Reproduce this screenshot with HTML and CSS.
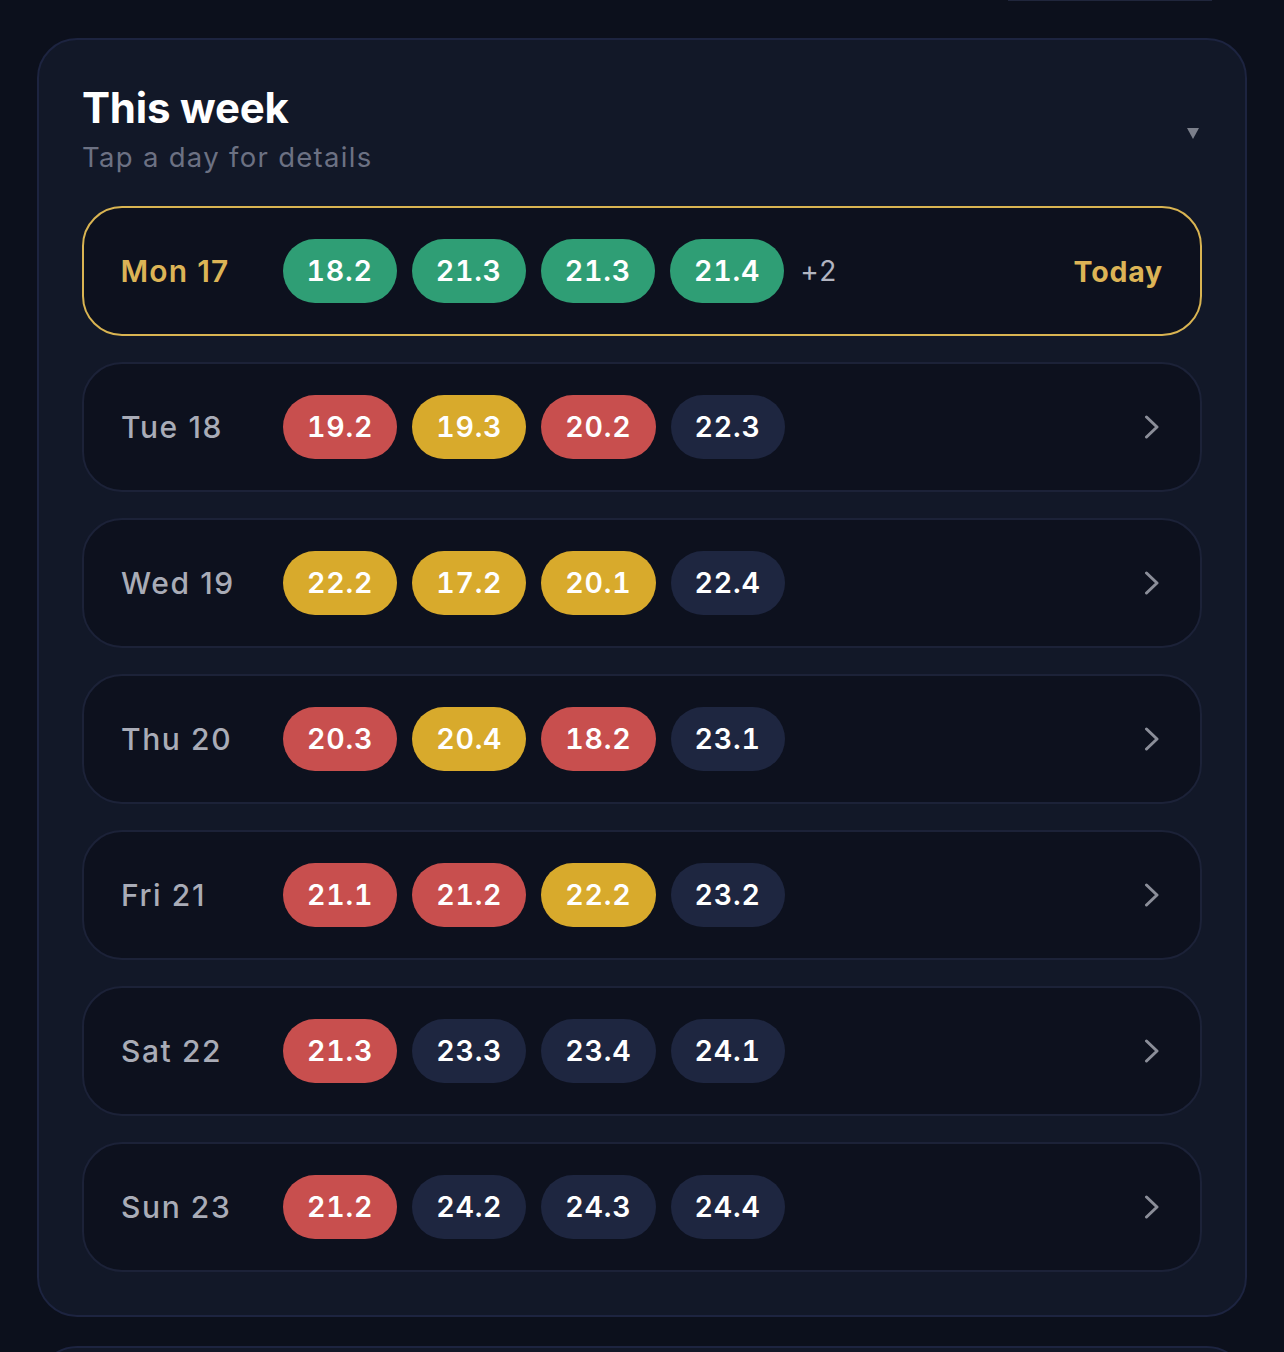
FILE: index.html
```html
<!DOCTYPE html>
<html lang="en">
<head>
<meta charset="utf-8">
<title>This week</title>
<link rel="stylesheet" href="styles.css">
</head>
<body>
<div class="prev-edge"></div>
<section class="card">
  <header class="card-head">
    <div class="head-text">
      <h1 class="title">This week</h1>
      <p class="subtitle">Tap a day for details</p>
    </div>
    <svg class="caret" width="12" height="11" viewBox="0 0 12 11"><path d="M0 0 H12 L6 11 Z" fill="#7b7f8b"/></svg>
  </header>
  <div class="days">
    <div class="day today">
      <span class="day-label">Mon 17</span>
      <div class="pills">
        <span class="pill green">18.2</span>
        <span class="pill green">21.3</span>
        <span class="pill green">21.3</span>
        <span class="pill green">21.4</span>
        <span class="more">+2</span>
      </div>
      <span class="today-tag">Today</span>
    </div>
    <div class="day">
      <span class="day-label">Tue 18</span>
      <div class="pills">
        <span class="pill red">19.2</span>
        <span class="pill yellow">19.3</span>
        <span class="pill red">20.2</span>
        <span class="pill navy">22.3</span>
      </div>
      <svg class="chev" width="16" height="24" viewBox="0 0 16 24"><path d="M2.5 2 L13 12 L2.5 22" fill="none" stroke="#8b8e99" stroke-width="3" stroke-linecap="round" stroke-linejoin="round"/></svg>
    </div>
    <div class="day">
      <span class="day-label">Wed 19</span>
      <div class="pills">
        <span class="pill yellow">22.2</span>
        <span class="pill yellow">17.2</span>
        <span class="pill yellow">20.1</span>
        <span class="pill navy">22.4</span>
      </div>
      <svg class="chev" width="16" height="24" viewBox="0 0 16 24"><path d="M2.5 2 L13 12 L2.5 22" fill="none" stroke="#8b8e99" stroke-width="3" stroke-linecap="round" stroke-linejoin="round"/></svg>
    </div>
    <div class="day">
      <span class="day-label">Thu 20</span>
      <div class="pills">
        <span class="pill red">20.3</span>
        <span class="pill yellow">20.4</span>
        <span class="pill red">18.2</span>
        <span class="pill navy">23.1</span>
      </div>
      <svg class="chev" width="16" height="24" viewBox="0 0 16 24"><path d="M2.5 2 L13 12 L2.5 22" fill="none" stroke="#8b8e99" stroke-width="3" stroke-linecap="round" stroke-linejoin="round"/></svg>
    </div>
    <div class="day">
      <span class="day-label">Fri 21</span>
      <div class="pills">
        <span class="pill red">21.1</span>
        <span class="pill red">21.2</span>
        <span class="pill yellow">22.2</span>
        <span class="pill navy">23.2</span>
      </div>
      <svg class="chev" width="16" height="24" viewBox="0 0 16 24"><path d="M2.5 2 L13 12 L2.5 22" fill="none" stroke="#8b8e99" stroke-width="3" stroke-linecap="round" stroke-linejoin="round"/></svg>
    </div>
    <div class="day">
      <span class="day-label">Sat 22</span>
      <div class="pills">
        <span class="pill red">21.3</span>
        <span class="pill navy">23.3</span>
        <span class="pill navy">23.4</span>
        <span class="pill navy">24.1</span>
      </div>
      <svg class="chev" width="16" height="24" viewBox="0 0 16 24"><path d="M2.5 2 L13 12 L2.5 22" fill="none" stroke="#8b8e99" stroke-width="3" stroke-linecap="round" stroke-linejoin="round"/></svg>
    </div>
    <div class="day">
      <span class="day-label">Sun 23</span>
      <div class="pills">
        <span class="pill red">21.2</span>
        <span class="pill navy">24.2</span>
        <span class="pill navy">24.3</span>
        <span class="pill navy">24.4</span>
      </div>
      <svg class="chev" width="16" height="24" viewBox="0 0 16 24"><path d="M2.5 2 L13 12 L2.5 22" fill="none" stroke="#8b8e99" stroke-width="3" stroke-linecap="round" stroke-linejoin="round"/></svg>
    </div>
  </div>
</section>
<section class="card next-card"></section>
</body>
</html>
```
FILE: styles.css
```css
* { box-sizing: border-box; }
html, body {
  margin: 0;
  padding: 0;
  background: #0c101c;
  font-family: Inter, "Noto Sans", "Liberation Sans", sans-serif;
  color: #fff;
  overflow: hidden;
  height: 1352px;
}
.prev-edge {
  height: 1px;
  width: 204px;
  margin-left: 1008px;
  background: #20263c;
}
.card {
  margin: 37px 0 0 37px;
  width: 1210px;
  background: #121828;
  border: 2px solid #1d2440;
  border-radius: 40px;
  padding: 43px 43px 43px 43px;
}
.next-card {
  margin-top: 29px;
  height: 200px;
}
.card-head {
  display: flex;
  justify-content: space-between;
  align-items: center;
}
.title {
  margin: 0;
  font-size: 42px;
  line-height: 50px;
  font-weight: 700;
  color: #ffffff;
  letter-spacing: -0.2px;
}
.subtitle {
  margin: 7px 0 0;
  font-size: 27.5px;
  line-height: 34px;
  font-weight: 400;
  color: #6c7183;
  letter-spacing: 1.3px;
}
.caret {
  margin: 9px 3px 0 0;
}
.days {
  margin-top: 32px;
  display: flex;
  flex-direction: column;
  gap: 26px;
}
.day {
  height: 130px;
  display: flex;
  align-items: center;
  background: #0d111e;
  border: 2px solid #1c2238;
  border-radius: 40px;
  padding: 0 40px 0 37px;
}
.day.today {
  border: 2.5px solid #d9b452;
  padding-left: 36.5px;
  padding-right: 37px;
}
.day-label {
  width: 162px;
  flex: none;
  font-size: 30px;
  font-weight: 500;
  color: #a9acb7;
  letter-spacing: 1.6px;
}
.today .day-label {
  color: #dcb456;
  font-weight: 600;
  letter-spacing: 1.2px;
}
.pills {
  flex: 1;
  display: flex;
  align-items: center;
  gap: 15px;
}
.pill {
  height: 64px;
  line-height: 64px;
  padding: 0 24px;
  border-radius: 32px;
  font-size: 28.5px;
  font-weight: 600;
  color: #ffffff;
  letter-spacing: 0.8px;
  font-variant-numeric: tabular-nums;
}
.green { background: #2f9e75; }
.red { background: #c84f4e; }
.yellow { background: #d8aa2c; }
.navy { background: #1e2640; }
.more {
  margin-left: 1px;
  font-size: 28px;
  font-weight: 400;
  color: #b2b5c1;
  letter-spacing: 1.5px;
}
.today-tag {
  font-size: 28.5px;
  font-weight: 700;
  color: #dcb456;
  letter-spacing: 0.8px;
}
.chev {
  flex: none;
}
```
